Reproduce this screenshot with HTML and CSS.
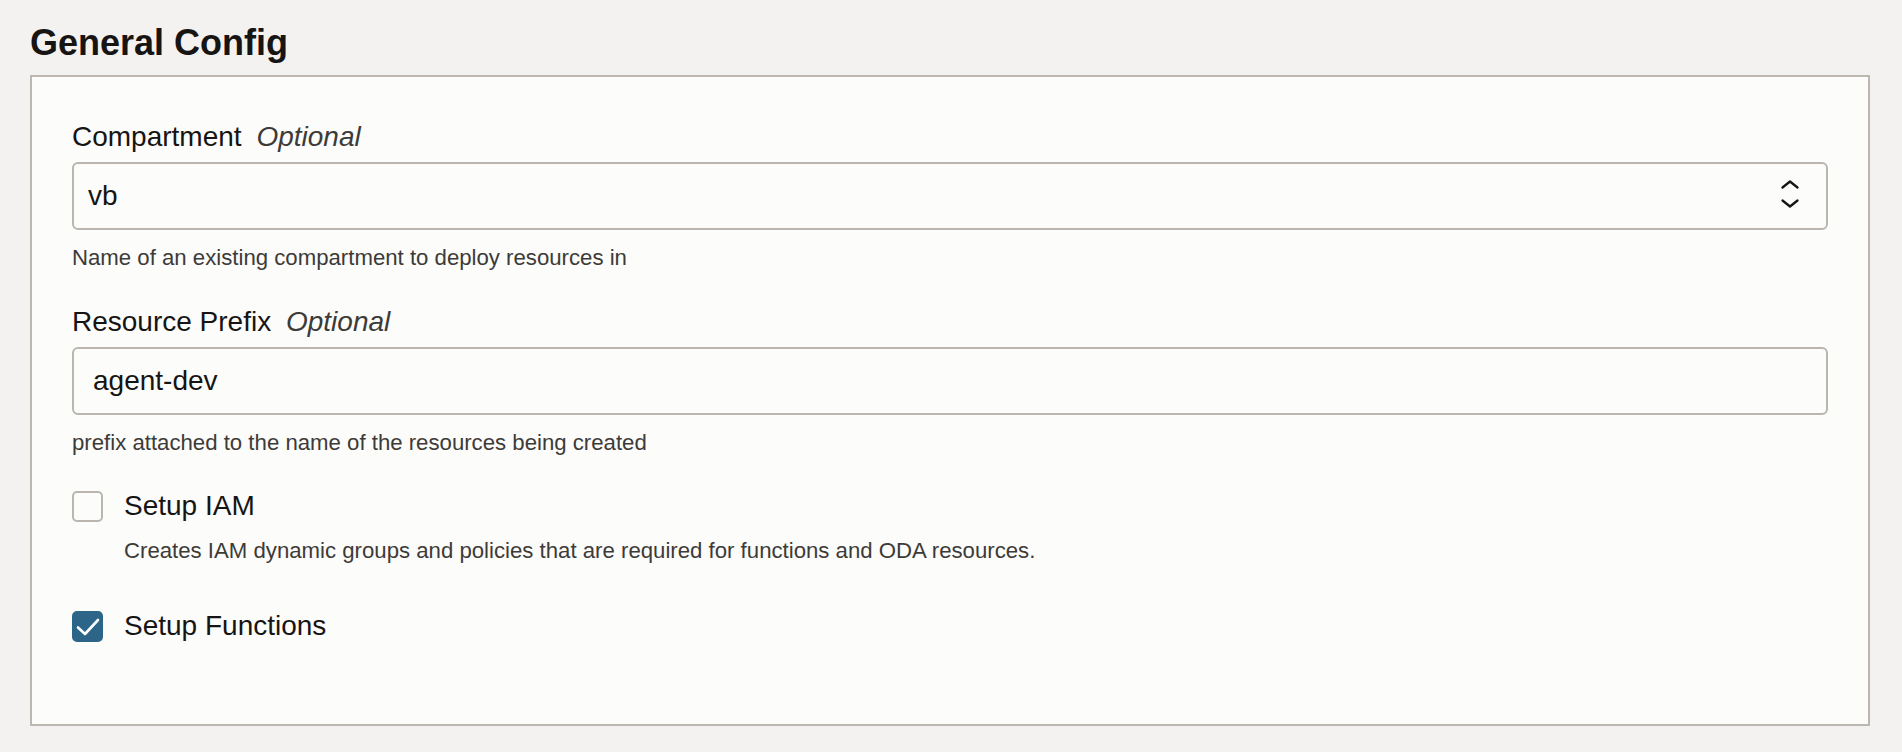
FILE: index.html
```html
<!DOCTYPE html>
<html lang="en">
<head>
<meta charset="utf-8">
<title>General Config</title>
<link rel="stylesheet" href="styles.css">
</head>
<body>
<div class="page">
  <h2 class="title">General Config</h2>
  <section class="panel">
    <div class="field">
      <div class="label">Compartment <span class="opt">Optional</span></div>
      <div class="control select">
        <span class="value">vb</span>
        <svg class="chev" width="20" height="34" viewBox="0 0 20 34" aria-hidden="true">
          <path d="M2.5 8.5 L10 2.5 L17.5 8.5" fill="none" stroke="#161513" stroke-width="2.3" stroke-linecap="round" stroke-linejoin="round"/>
          <path d="M2.5 21.5 L10 27.5 L17.5 21.5" fill="none" stroke="#161513" stroke-width="2.3" stroke-linecap="round" stroke-linejoin="round"/>
        </svg>
      </div>
      <div class="help">Name of an existing compartment to deploy resources in</div>
    </div>
    <div class="field">
      <div class="label">Resource Prefix <span class="opt">Optional</span></div>
      <div class="control text"><span class="value">agent-dev</span></div>
      <div class="help">prefix attached to the name of the resources being created</div>
    </div>
    <div class="check">
      <div class="check-row">
        <span class="box"></span>
        <span class="check-label">Setup IAM</span>
      </div>
      <div class="help check-help">Creates IAM dynamic groups and policies that are required for functions and ODA resources.</div>
    </div>
    <div class="check check-last">
      <div class="check-row">
        <span class="box checked">
          <svg width="31" height="31" viewBox="0 0 31 31" aria-hidden="true">
            <path d="M6 16.5 L13 23 L26 9" fill="none" stroke="#ffffff" stroke-width="2.6" stroke-linecap="round" stroke-linejoin="round"/>
          </svg>
        </span>
        <span class="check-label">Setup Functions</span>
      </div>
    </div>
  </section>
</div>
</body>
</html>
```

FILE: styles.css
```css
* { box-sizing: border-box; }
html, body {
  margin: 0;
  padding: 0;
  background: #f3f2f1;
}
body {
  font-family: "Liberation Sans", Arial, sans-serif;
  color: #161513;
}
.page {
  padding: 23px 32px 0 30px;
}
.title {
  margin: 0 0 12px 0;
  font-size: 36px;
  line-height: 40px;
  font-weight: bold;
  color: #161513;
}
.panel {
  border: 2px solid #bcb8b1;
  background: #fcfcfb;
  padding: 43px 40px 81px 40px;
}
.field + .field {
  margin-top: 33px;
}
.label {
  font-size: 28px;
  line-height: 34px;
  color: #161513;
}
.opt {
  font-style: italic;
  color: #3d3b38;
  margin-left: 7px;
}
.control {
  margin-top: 8px;
  height: 68px;
  border: 2px solid #bab6af;
  border-radius: 6px;
  background: #fcfcfb;
  display: flex;
  align-items: center;
  font-size: 28px;
  color: #161513;
}
.select {
  padding: 0 26px 0 14px;
  justify-content: space-between;
}
.text {
  padding: 0 20px 0 19px;
}
.chev {
  display: block;
}
.help {
  margin-top: 14px;
  font-size: 22.2px;
  line-height: 28px;
  color: #3d3b38;
}
.check {
  margin-top: 32px;
}
.check-last {
  margin-top: 44px;
}
.check-row {
  display: flex;
  align-items: center;
  gap: 21px;
}
.box {
  width: 31px;
  height: 31px;
  border: 2px solid #bab6af;
  border-radius: 5px;
  background: #fcfcfb;
  flex: none;
  position: relative;
}
.box.checked {
  background: #2d6588;
  border-color: #2d6588;
}
.box.checked svg {
  position: absolute;
  left: -2px;
  top: -2px;
}
.check-label {
  font-size: 28px;
  line-height: 34px;
}
.check-help {
  margin-top: 14px;
  padding-left: 52px;
}
```
